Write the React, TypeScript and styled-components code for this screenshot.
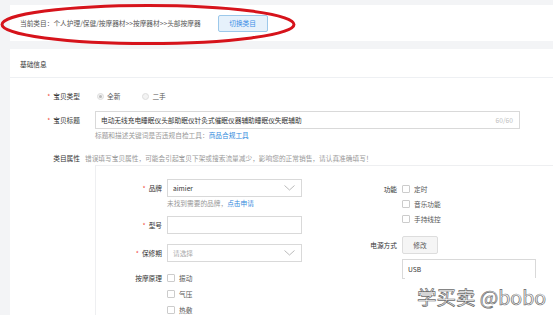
import styled, { createGlobalStyle } from "styled-components"

const GlobalStyle = createGlobalStyle`
  html, body {
    margin: 0;
    padding: 0;
    background: #f3f4f6;
  }
  body {
    font-family: "Noto Sans CJK SC", "Liberation Sans", sans-serif;
    font-size: 6.7px;
    color: #444;
    overflow: hidden;
  }
`

const Page = styled.div`
  position: relative;
  width: 553px;
  height: 315px;
  padding: 5px 0 0 10px;
  box-sizing: border-box;
  overflow: hidden;
  display: flex;
  flex-direction: column;
  gap: 8px;
`

const CategoryBar = styled.div`
  height: 36px;
  flex-shrink: 0;
  background: #fff;
  display: flex;
  align-items: center;
  padding-left: 10px;
  color: #555;
`

const SwitchButton = styled.div`
  margin-left: 17px;
  width: 50px;
  height: 17px;
  box-sizing: border-box;
  border: 1px solid #9cc8ea;
  border-radius: 2px;
  background: #e6f1fb;
  color: #3a8ee6;
  display: flex;
  align-items: center;
  justify-content: center;
`

const Card = styled.div`
  flex: 1;
  background: #fff;
  display: flex;
  flex-direction: column;
`

const CardHeader = styled.div`
  height: 29px;
  box-sizing: border-box;
  border-bottom: 1px solid #eef0f3;
  padding: 2px 0 0 10px;
  display: flex;
  align-items: center;
  color: #333;
`

const Form = styled.div`
  padding-top: 12px;
  display: flex;
  flex-direction: column;
`

const Row = styled.div<{ $top?: number; $alignTop?: boolean }>`
  display: flex;
  align-items: ${(p) => (p.$alignTop ? "flex-start" : "center")};
  min-height: 12px;
  line-height: 12px;
  margin-top: ${(p) => p.$top ?? 0}px;
`

const Label = styled.div<{ $width: number }>`
  width: ${(p) => p.$width}px;
  flex-shrink: 0;
  text-align: right;
  color: #333;
  white-space: nowrap;
`

const Req = styled.span`
  color: #f04134;
  margin-right: 3px;
`

const Control = styled.div<{ $gap?: number }>`
  margin-left: ${(p) => p.$gap ?? 15}px;
  display: flex;
  align-items: center;
`

const RadioItem = styled.label`
  display: flex;
  align-items: center;
  gap: 3px;
  margin-left: 2px;
  margin-right: 20px;
  color: #555;
`

const RadioDot = styled.span<{ $checked?: boolean }>`
  width: 7px;
  height: 7px;
  box-sizing: border-box;
  border-radius: 50%;
  border: 1px solid #ddd;
  background: #f3f3f3;
  display: flex;
  align-items: center;
  justify-content: center;
  &::after {
    content: "";
    width: 3px;
    height: 3px;
    border-radius: 50%;
    background: ${(p) => (p.$checked ? "#bbb" : "transparent")};
  }
`

const TextBox = styled.div<{ $width: number; $height?: number }>`
  width: ${(p) => p.$width}px;
  height: ${(p) => p.$height ?? 18}px;
  box-sizing: border-box;
  border: 1px solid #d9d9d9;
  padding: 0 6px 0 5px;
  display: flex;
  align-items: center;
  justify-content: space-between;
  color: #333;
  white-space: nowrap;
`

const Counter = styled.span`
  color: #c0c0c0;
`

const Placeholder = styled.span`
  color: #aaa;
`

const Hint = styled.div<{ $left: number }>`
  margin-left: ${(p) => p.$left}px;
  margin-top: 1px;
  line-height: 10px;
  color: #999;
  white-space: nowrap;
`

const Link = styled.span`
  color: #3089dc;
`

const Note = styled.span`
  color: #999;
  white-space: nowrap;
`

const Panel = styled.div`
  margin: 1px 0 0 85px;
  flex: 1;
  border-top: 1px solid #eeeff1;
  border-left: 1px solid #eeeff1;
  display: flex;
`

const Column = styled.div<{ $width?: number; $top: number }>`
  width: ${(p) => (p.$width ? `${p.$width}px` : "auto")};
  flex-shrink: 0;
  padding-top: ${(p) => p.$top}px;
  display: flex;
  flex-direction: column;
`

const CheckList = styled.div<{ $gap: number }>`
  display: flex;
  flex-direction: column;
  gap: ${(p) => p.$gap}px;
`

const CheckItem = styled.label`
  display: flex;
  align-items: center;
  gap: 4px;
  height: 12px;
  color: #555;
`

const Box = styled.span`
  width: 8px;
  height: 8px;
  box-sizing: border-box;
  border: 1px solid #ccc;
  border-radius: 1px;
  background: #fff;
`

const PlainButton = styled.div`
  width: 36px;
  height: 18px;
  box-sizing: border-box;
  border: 1px solid #ddd;
  border-radius: 2px;
  background: #f5f5f5;
  color: #555;
  display: flex;
  align-items: center;
  justify-content: center;
`

const Watermark = styled.div`
  position: absolute;
  right: 0;
  bottom: 0;
  width: 148px;
  height: 37px;
  background: #fff;
  padding-left: 12px;
  box-sizing: border-box;
  display: flex;
  align-items: center;
  font-size: 19.5px;
  color: #fff;
  -webkit-text-stroke: 0.7px #6a6a6a;
  white-space: nowrap;
`

const Annotation = styled.svg`
  position: absolute;
  left: 0;
  top: 0;
  pointer-events: none;
`

const Chevron = () => (
  <svg width="11" height="6" viewBox="0 0 11 6">
    <polyline points="0.5,0.5 5.5,5 10.5,0.5" fill="none" stroke="#aaa" strokeWidth="0.8" />
  </svg>
)

const Check = ({ text }: { text: string }) => (
  <CheckItem>
    <Box />
    {text}
  </CheckItem>
)

const App = () => {
  return (
    <>
      <GlobalStyle />
      <Page>
        <CategoryBar>
          当前类目：个人护理/保健/按摩器材&gt;&gt;按摩器材&gt;&gt;头部按摩器
          <SwitchButton>切换类目</SwitchButton>
        </CategoryBar>
        <Card>
          <CardHeader>基础信息</CardHeader>
          <Form>
            <Row>
              <Label $width={70}>
                <Req>*</Req>宝贝类型
              </Label>
              <Control>
                <RadioItem>
                  <RadioDot $checked />
                  全新
                </RadioItem>
                <RadioItem>
                  <RadioDot />
                  二手
                </RadioItem>
              </Control>
            </Row>
            <Row $top={9}>
              <Label $width={70}>
                <Req>*</Req>宝贝标题
              </Label>
              <Control>
                <TextBox $width={425}>
                  电动无线充电睡眠仪头部助眠仪针灸式催眠仪器辅助睡眠仪失眠辅助
                  <Counter>60/60</Counter>
                </TextBox>
              </Control>
            </Row>
            <Hint $left={85}>
              标题和描述关键词是否违规自检工具：<Link>商品合规工具</Link>
            </Hint>
            <Row $top={12}>
              <Label $width={70}>类目属性</Label>
              <Control $gap={5}>
                <Note>
                  错误填写宝贝属性，可能会引起宝贝下架或搜索流量减少，影响您的正常销售，请认真准确填写！
                </Note>
              </Control>
            </Row>
          </Form>
          <Panel>
            <Column $width={206} $top={13}>
              <Row>
                <Label $width={66}>
                  <Req>*</Req>品牌
                </Label>
                <Control $gap={5}>
                  <TextBox $width={135}>
                    aimier
                    <Chevron />
                  </TextBox>
                </Control>
              </Row>
              <Hint $left={71}>
                未找到需要的品牌，<Link>点击申请</Link>
              </Hint>
              <Row $top={8}>
                <Label $width={66}>
                  <Req>*</Req>型号
                </Label>
                <Control $gap={5}>
                  <TextBox $width={135} />
                </Control>
              </Row>
              <Row $top={10}>
                <Label $width={66}>
                  <Req>*</Req>保修期
                </Label>
                <Control $gap={5}>
                  <TextBox $width={135}>
                    <Placeholder>请选择</Placeholder>
                    <Chevron />
                  </TextBox>
                </Control>
              </Row>
              <Row $top={10} $alignTop>
                <Label $width={66}>按摩原理</Label>
                <Control $gap={5}>
                  <CheckList $gap={4}>
                    <Check text="振动" />
                    <Check text="气压" />
                    <Check text="热敷" />
                  </CheckList>
                </Control>
              </Row>
            </Column>
            <Column $top={17}>
              <Row $alignTop>
                <Label $width={95}>功能</Label>
                <Control $gap={5}>
                  <CheckList $gap={3}>
                    <Check text="定时" />
                    <Check text="音乐功能" />
                    <Check text="手持线控" />
                  </CheckList>
                </Control>
              </Row>
              <Row $top={11}>
                <Label $width={95}>电源方式</Label>
                <Control $gap={5}>
                  <PlainButton>修改</PlainButton>
                </Control>
              </Row>
              <Row $top={5}>
                <Control $gap={100}>
                  <TextBox $width={134} $height={20}>
                    USB
                  </TextBox>
                </Control>
              </Row>
            </Column>
          </Panel>
        </Card>
        <Watermark>学买卖 @bobo</Watermark>
        <Annotation width="300" height="50" viewBox="0 0 300 50">
          <ellipse cx="148" cy="24.5" rx="146" ry="19" fill="none" stroke="#d6131b" strokeWidth="3" />
        </Annotation>
      </Page>
    </>
  )
}

export default App
